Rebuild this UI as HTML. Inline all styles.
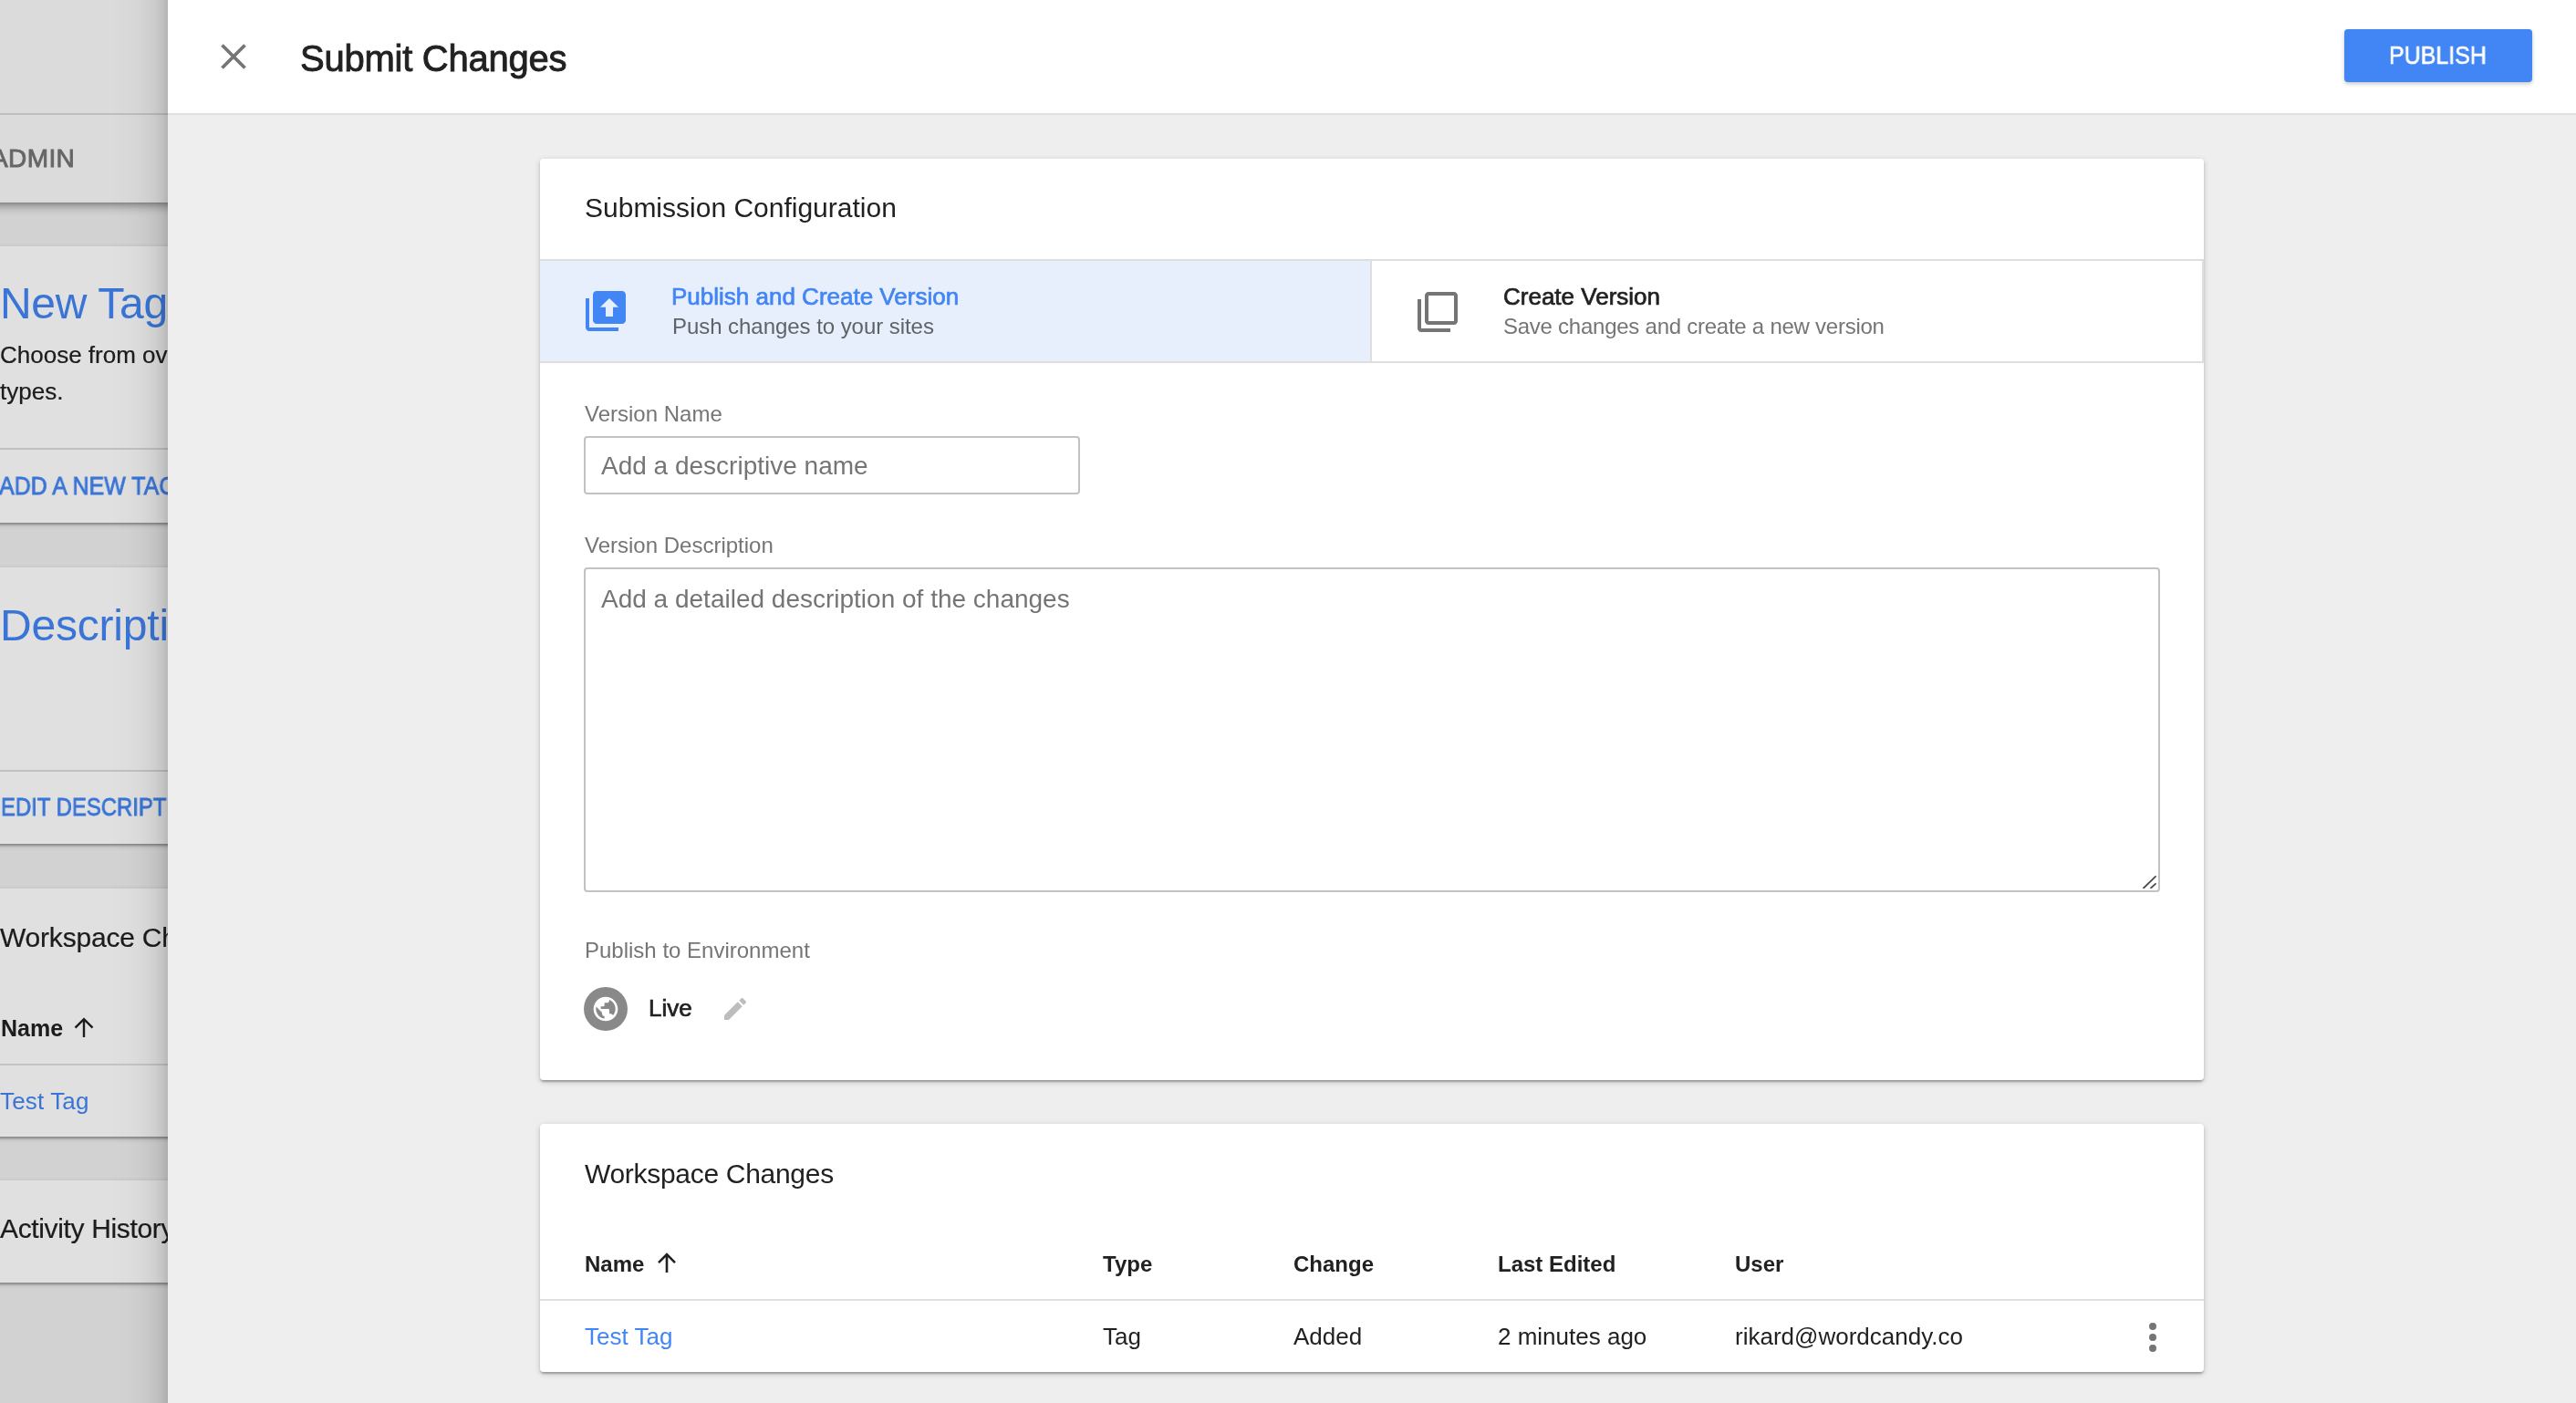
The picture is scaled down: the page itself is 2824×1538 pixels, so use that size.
<!DOCTYPE html>
<html><head><meta charset="utf-8"><title>Submit Changes</title>
<style>
html,body{margin:0;padding:0;}
body{width:2824px;height:1538px;overflow:hidden;position:relative;background:#eeeeee;font-family:"Liberation Sans",sans-serif;}
.t{position:absolute;white-space:nowrap;will-change:transform;}
.r{position:absolute;}
#under{position:absolute;z-index:0;left:0;top:0;width:184px;height:1538px;overflow:hidden;background:#f0f0f0;}
#scrim{position:absolute;left:0;top:0;width:184px;height:1538px;background:linear-gradient(to right,rgba(0,0,0,0) 122px,rgba(0,0,0,.01) 140px,rgba(0,0,0,.022) 150px,rgba(0,0,0,.042) 160px,rgba(0,0,0,.075) 170px,rgba(0,0,0,.12) 178px,rgba(0,0,0,.18) 184px),rgba(0,0,0,.12);}
#panel{position:absolute;left:184px;top:0;width:2640px;height:1538px;background:#eeeeee;overflow:hidden;
}
#hdr{position:absolute;left:0;top:0;width:2640px;height:124px;background:#fff;border-bottom:2px solid #e0e0e0;}
</style></head><body>
<div id="under">
<div class="r" style="left:0px;top:0px;width:184px;height:124px;background:#fafafa;"></div>
<div class="r" style="left:0px;top:124px;width:184px;height:2px;background:#dadada;"></div>
<div class="r" style="left:0px;top:126px;width:184px;height:96px;background:#fafafa;"></div>
<div class="r" style="left:0px;top:222px;width:184px;height:16px;background:linear-gradient(to bottom,rgba(0,0,0,.36),rgba(0,0,0,.22) 3px,rgba(0,0,0,.1) 7px,rgba(0,0,0,.03) 11px,rgba(0,0,0,0));"></div>
<div class="t" style="left:-10px;top:160.2px;font-size:28px;line-height:28px;color:#757575;letter-spacing:0.4px;-webkit-text-stroke:0.9px #757575;">ADMIN</div>
<div class="r" style="left:-48px;top:270px;width:400px;height:303px;background:#fff;box-shadow:0 2px 2px 0 rgba(0,0,0,.14),0 4px 2px -2px rgba(0,0,0,.12),0 2px 6px 0 rgba(0,0,0,.2);"></div>
<div class="t" style="left:0px;top:309.3px;font-size:48px;line-height:48px;color:#4285f4;letter-spacing:-0.3px;">New Tag</div>
<div class="t" style="left:0px;top:376.0px;font-size:26px;line-height:26px;color:#212121;-webkit-text-stroke:0.2px #212121;">Choose from over 50 tag</div>
<div class="t" style="left:0px;top:416.0px;font-size:26px;line-height:26px;color:#212121;-webkit-text-stroke:0.2px #212121;">types.</div>
<div class="r" style="left:-48px;top:491px;width:400px;height:2px;background:#dcdcdc;"></div>
<div class="t" style="left:-1.5px;top:520.1px;font-size:27px;line-height:27px;color:#4285f4;-webkit-text-stroke:0.8px #4285f4;transform:scaleX(0.925);transform-origin:0 0;">ADD A NEW TAG</div>
<div class="r" style="left:-48px;top:622px;width:400px;height:303px;background:#fff;box-shadow:0 2px 2px 0 rgba(0,0,0,.14),0 4px 2px -2px rgba(0,0,0,.12),0 2px 6px 0 rgba(0,0,0,.2);"></div>
<div class="t" style="left:0px;top:661.8px;font-size:48px;line-height:48px;color:#4285f4;letter-spacing:-0.2px;">Description</div>
<div class="r" style="left:-48px;top:844px;width:400px;height:2px;background:#dcdcdc;"></div>
<div class="t" style="left:0.5px;top:871.8px;font-size:27px;line-height:27px;color:#4285f4;-webkit-text-stroke:0.8px #4285f4;transform:scaleX(0.885);transform-origin:0 0;">EDIT DESCRIPTION</div>
<div class="r" style="left:-48px;top:974px;width:400px;height:272px;background:#fff;box-shadow:0 2px 2px 0 rgba(0,0,0,.14),0 4px 2px -2px rgba(0,0,0,.12),0 2px 6px 0 rgba(0,0,0,.2);"></div>
<div class="t" style="left:0px;top:1012.5px;font-size:30px;line-height:30px;color:#212121;letter-spacing:-0.2px;-webkit-text-stroke:0.2px #212121;">Workspace Changes</div>
<div class="t" style="left:1px;top:1114.5px;font-size:25px;line-height:25px;color:#212121;font-weight:700;">Name</div>
<svg class="t" style="left:80.5px;top:1115px" width="22" height="22" viewBox="0 0 22 22"><path d="M11 2.2V22M1.5 11.7L11 2.2L20.5 11.7" fill="none" stroke="#212121" stroke-width="2.4"/></svg>
<div class="r" style="left:-48px;top:1166px;width:400px;height:2px;background:#e0e0e0;"></div>
<div class="t" style="left:0px;top:1194.3px;font-size:26px;line-height:26px;color:#4285f4;letter-spacing:0.15px;">Test Tag</div>
<div class="r" style="left:-48px;top:1294px;width:400px;height:112px;background:#fff;box-shadow:0 2px 2px 0 rgba(0,0,0,.14),0 4px 2px -2px rgba(0,0,0,.12),0 2px 6px 0 rgba(0,0,0,.2);"></div>
<div class="t" style="left:0px;top:1332.0px;font-size:30px;line-height:30px;color:#212121;letter-spacing:-0.35px;-webkit-text-stroke:0.2px #212121;">Activity History</div>
</div>
<div id="scrim"></div>
<div id="panel">
<div id="hdr"></div>
<svg class="t" style="left:58px;top:48px" width="28" height="28" viewBox="0 0 28 28"><path d="M1.5 1.5L26.5 26.5M26.5 1.5L1.5 26.5" stroke="#757575" stroke-width="3.8" fill="none"/></svg>
<div class="t" style="left:145px;top:44.0px;font-size:40px;line-height:40px;color:#212121;letter-spacing:-0.25px;-webkit-text-stroke:0.9px #212121;">Submit Changes</div>
<div class="r" style="left:2386px;top:32px;width:206px;height:58px;background:#4285f4;border-radius:4px;box-shadow:0 2px 4px rgba(0,0,0,.22);"></div>
<div class="t" style="left:2434.5px;top:47.5px;font-size:27px;line-height:27px;color:#fff;-webkit-text-stroke:0.6px #fff;transform:scaleX(0.925);transform-origin:0 0;">PUBLISH</div>
<div class="r" style="left:408px;top:174px;width:1824px;height:1010px;background:#fff;border-radius:4px;background:#fff;box-shadow:0 2px 2px 0 rgba(0,0,0,.14),0 4px 2px -2px rgba(0,0,0,.12),0 2px 6px 0 rgba(0,0,0,.2);"></div>
<div class="t" style="left:457px;top:212.5px;font-size:30px;line-height:30px;color:#212121;">Submission Configuration</div>
<div class="r" style="left:408px;top:284px;width:1824px;height:2px;background:#dedede;"></div>
<div class="r" style="left:408px;top:286px;width:910px;height:110px;background:#e8effc;"></div>
<div class="r" style="left:408px;top:396px;width:1824px;height:2px;background:#dedede;"></div>
<div class="r" style="left:1318px;top:286px;width:2px;height:110px;background:#dedede;"></div>
<div class="r" style="left:2230px;top:286px;width:2px;height:110px;background:#dedede;"></div>
<svg class="t" style="left:456px;top:317px" width="48" height="48" viewBox="0 0 24 24">
<path fill="#4285f4" d="M3 5H1v16c0 1.1.9 2 2 2h16v-2H3V5zm18-4H7c-1.1 0-2 .9-2 2v14c0 1.1.9 2 2 2h14c1.1 0 2-.9 2-2V3c0-1.1-.9-2-2-2z"/>
<path fill="#e8effc" d="M14 5L9 9.9H12V15H16V9.9H19Z"/>
</svg>
<div class="t" style="left:552px;top:312.0px;font-size:26px;line-height:26px;color:#4285f4;-webkit-text-stroke:0.7px #4285f4;">Publish and Create Version</div>
<div class="t" style="left:553px;top:345.5px;font-size:24px;line-height:24px;color:#5f6368;letter-spacing:-0.05px;">Push changes to your sites</div>
<svg class="t" style="left:1368px;top:318px" width="48" height="48" viewBox="0 0 24 24">
<path fill="#757575" d="M3 5H1v16c0 1.1.9 2 2 2h16v-2H3V5zm18-4H7c-1.1 0-2 .9-2 2v14c0 1.1.9 2 2 2h14c1.1 0 2-.9 2-2V3c0-1.1-.9-2-2-2zm0 16H7V3h14v14z"/>
</svg>
<div class="t" style="left:1464px;top:311.8px;font-size:26px;line-height:26px;color:#212121;-webkit-text-stroke:0.7px #212121;">Create Version</div>
<div class="t" style="left:1464px;top:345.5px;font-size:24px;line-height:24px;color:#757575;letter-spacing:-0.25px;">Save changes and create a new version</div>
<div class="t" style="left:457px;top:442.1px;font-size:24px;line-height:24px;color:#757575;">Version Name</div>
<div class="r" style="left:456px;top:478px;width:544px;height:64px;box-sizing:border-box;border:2px solid #c2c2c2;border-radius:4px;"></div>
<div class="t" style="left:475px;top:496.5px;font-size:28px;line-height:28px;color:#757575;">Add a descriptive name</div>
<div class="t" style="left:457px;top:586.0px;font-size:24px;line-height:24px;color:#757575;">Version Description</div>
<div class="r" style="left:456px;top:622px;width:1728px;height:356px;box-sizing:border-box;border:2px solid #c2c2c2;border-radius:4px;"></div>
<div class="t" style="left:475px;top:642.5px;font-size:28px;line-height:28px;color:#757575;">Add a detailed description of the changes</div>
<svg class="t" style="left:2160px;top:954px" width="20" height="20" viewBox="0 0 20 20"><path d="M6 19.5L19 6.8M14 19.5L19 14.9" stroke="#4a4a4a" stroke-width="1.8" stroke-linecap="round" fill="none"/></svg>
<div class="t" style="left:457px;top:1030.2px;font-size:24px;line-height:24px;color:#757575;">Publish to Environment</div>
<svg class="t" style="left:456px;top:1082px" width="48" height="48" viewBox="0 0 48 48">
<circle cx="24" cy="24" r="24" fill="#898989"/>
<g transform="translate(8,8) scale(1.3333)"><path fill="#fff" d="M12 2C6.48 2 2 6.48 2 12s4.48 10 10 10 10-4.48 10-10S17.52 2 12 2zm-1 17.93c-3.95-.49-7-3.85-7-7.93 0-.62.08-1.21.21-1.79L9 15v1c0 1.1.9 2 2 2v1.93zm6.9-2.54c-.26-.81-1-1.39-1.9-1.39h-1v-3c0-.55-.45-1-1-1H8v-2h2c.55 0 1-.45 1-1V7h2c1.1 0 2-.9 2-2v-.41c2.93 1.19 5 4.06 5 7.41 0 2.08-.8 3.97-2.1 5.39z"/></g>
</svg>
<div class="t" style="left:527px;top:1092.0px;font-size:26px;line-height:26px;color:#212121;-webkit-text-stroke:0.7px #212121;">Live</div>
<svg class="t" style="left:606px;top:1090px" width="32" height="32" viewBox="0 0 24 24">
<path fill="#bdbdbd" d="M3 17.25V21h3.75L17.81 9.94l-3.75-3.75L3 17.25zM20.71 7.04c.39-.39.39-1.02 0-1.41l-2.34-2.34c-.39-.39-1.02-.39-1.41 0l-1.83 1.83 3.75 3.75 1.83-1.83z"/>
</svg>
<div class="r" style="left:408px;top:1232px;width:1824px;height:272px;background:#fff;border-radius:4px;background:#fff;box-shadow:0 2px 2px 0 rgba(0,0,0,.14),0 4px 2px -2px rgba(0,0,0,.12),0 2px 6px 0 rgba(0,0,0,.2);"></div>
<div class="t" style="left:457px;top:1272.0px;font-size:30px;line-height:30px;color:#212121;letter-spacing:-0.3px;">Workspace Changes</div>
<div class="t" style="left:457px;top:1373.9px;font-size:24px;line-height:24px;color:#212121;font-weight:700;">Name</div>
<div class="t" style="left:1025px;top:1373.9px;font-size:24px;line-height:24px;color:#212121;font-weight:700;">Type</div>
<div class="t" style="left:1234px;top:1373.9px;font-size:24px;line-height:24px;color:#212121;font-weight:700;">Change</div>
<div class="t" style="left:1458px;top:1373.9px;font-size:24px;line-height:24px;color:#212121;font-weight:700;">Last Edited</div>
<div class="t" style="left:1718px;top:1373.9px;font-size:24px;line-height:24px;color:#212121;font-weight:700;">User</div>
<svg class="t" style="left:536px;top:1373px" width="22" height="22" viewBox="0 0 22 22"><path d="M11 2.5V22M2 11.2L11 2.2L20 11.2" fill="none" stroke="#212121" stroke-width="2.6"/></svg>
<div class="r" style="left:408px;top:1424px;width:1824px;height:2px;background:#e0e0e0;"></div>
<div class="t" style="left:457px;top:1452.0px;font-size:26px;line-height:26px;color:#4285f4;">Test Tag</div>
<div class="t" style="left:1025px;top:1452.0px;font-size:26px;line-height:26px;color:#212121;">Tag</div>
<div class="t" style="left:1234px;top:1452.0px;font-size:26px;line-height:26px;color:#212121;">Added</div>
<div class="t" style="left:1458px;top:1452.0px;font-size:26px;line-height:26px;color:#212121;">2 minutes ago</div>
<div class="t" style="left:1718px;top:1452.0px;font-size:26px;line-height:26px;color:#212121;">rikard@wordcandy.co</div>
<div class="r" style="left:2172px;top:1450px;width:8px;height:8px;background:#757575;border-radius:50%;"></div>
<div class="r" style="left:2172px;top:1462px;width:8px;height:8px;background:#757575;border-radius:50%;"></div>
<div class="r" style="left:2172px;top:1474px;width:8px;height:8px;background:#757575;border-radius:50%;"></div>
</div>
</body></html>
